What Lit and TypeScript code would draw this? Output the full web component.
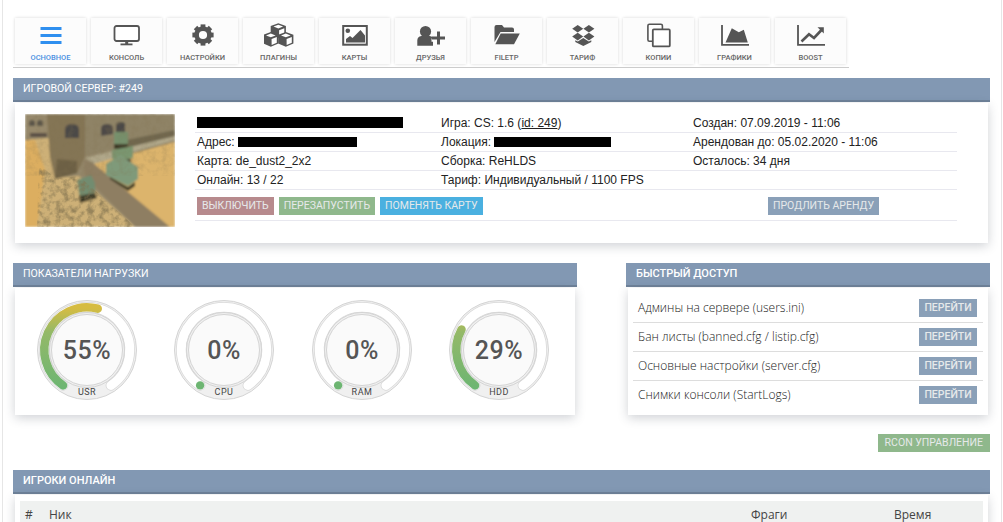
import { LitElement, html, css, svg } from 'lit';
import { customElement } from 'lit/decorators.js';

// little helper for the isometric boxes of the plugins icon
const cube = (x: number, y: number) => svg`
  <path d="M${x} ${y - 6.6}l7.6 2.8v8.6l-7.6 3.4-7.6-3.4v-8.6z" fill="#555"/>
  <path d="M${x} ${y - 5}l4.8 1.8-4.8 1.9-4.8-1.9z" fill="#fff"/>
  <path d="M${x + 6} ${y - 1.6}l-5.2 2v6l5.2-2.2z" fill="#fff"/>`;

const gearTeeth = [0, 45, 90, 135, 180, 225, 270, 315];

const ICONS: Record<string, unknown> = {
  menu: svg`<g fill="#2f8fef"><rect x="4.5" y="7" width="21" height="3"/><rect x="4.5" y="14" width="21" height="3"/><rect x="4.5" y="21" width="21" height="3"/></g>`,
  monitor: svg`<rect x="2.5" y="6" width="24.5" height="15" rx="2" fill="#fff" stroke="#555" stroke-width="1.8"/>
    <rect x="13.2" y="21" width="3" height="3" fill="#555"/><rect x="8.5" y="23.5" width="12" height="1.8" fill="#555"/>`,
  gear: svg`<circle cx="15" cy="15" r="6.4" fill="none" stroke="#555" stroke-width="4.6"/>
    ${gearTeeth.map((a) => svg`<rect x="12.6" y="4.4" width="4.8" height="4" fill="#555" transform="rotate(${a} 15 15)"/>`)}`,
  cubes: svg`${cube(14.3, 9.8)}${cube(6.8, 18.6)}${cube(21.8, 18.6)}`,
  image: svg`<rect x="3.2" y="6" width="23.6" height="18.7" fill="#fff" stroke="#555" stroke-width="2"/>
    <circle cx="7.8" cy="10.8" r="2.3" fill="#555"/><path d="M6 22.5v-3.5l4-3 2.5 2 8-8 4.5 5.5v7z" fill="#555"/>`,
  user: svg`<circle cx="9.5" cy="11.5" r="5.6" fill="#555"/><path d="M1.3 25.8v-5.3q0-4 4-4.5h8.4q3 .3 3.3 2.6h-1.5v3.2h1.5v4z" fill="#555"/>
    <path d="M21 11.5h3v5h5v3h-5v5h-3v-5h-5v-3h5z" fill="#555"/>`,
  folder: svg`<path d="M2.5 22V7q0-2 2-2h5.5l2 2.5h8q2 0 2 2v2.5H8.5z" fill="#555"/><path d="M8.7 13.5h19.1L22 24.3H3.3z" fill="#555"/>`,
  dropbox: svg`<g fill="#555"><path d="M9.7 5l5.5 3.8-5.5 3.8-5.5-3.8z"/><path d="M20.9 5l5.5 3.8-5.5 3.8-5.5-3.8z"/><path d="M9.7 12.8l5.5 3.8-5.5 3.8-5.5-3.8z"/><path d="M20.9 12.8l5.5 3.8-5.5 3.8-5.5-3.8z"/><path d="M15.3 18l5.5 3.6 2.5-1.3v1.6l-8 4-8-4v-1.6l2.5 1.3z"/></g>`,
  copy: svg`<rect x="3.9" y="4.2" width="14.5" height="17" rx="1.5" fill="#fff" stroke="#555" stroke-width="1.6"/>
    <rect x="8.8" y="9.4" width="17" height="17" rx="1" fill="#fff" stroke="#555" stroke-width="1.8"/>`,
  area: svg`<path d="M2 5v19.8h27" fill="none" stroke="#555" stroke-width="1.8"/><path d="M5.5 22.5L11.8 8.3l7 4 5-2.5 4 12.7z" fill="#555"/>`,
  line: svg`<path d="M2 5v19.8h27" fill="none" stroke="#555" stroke-width="1.8"/>
    <path d="M5.5 21.5l7.5-7.2 5 3.7 7.5-8" fill="none" stroke="#555" stroke-width="2.6"/><path d="M21.5 7.3h6.3v6.2z" fill="#555"/>`,
};

const NAV = [
  ['ОСНОВНОЕ', 'menu'],
  ['КОНСОЛЬ', 'monitor'],
  ['НАСТРОЙКИ', 'gear'],
  ['ПЛАГИНЫ', 'cubes'],
  ['КАРТЫ', 'image'],
  ['ДРУЗЬЯ', 'user'],
  ['FILETP', 'folder'],
  ['ТАРИФ', 'dropbox'],
  ['КОПИИ', 'copy'],
  ['ГРАФИКИ', 'area'],
  ['BOOST', 'line'],
];

const GAUGES = [
  { label: 'USR', value: 55 },
  { label: 'CPU', value: 0 },
  { label: 'RAM', value: 0 },
  { label: 'HDD', value: 29 },
];

const LINKS = [
  'Админы на сервере (users.ini)',
  'Бан листы (banned.cfg / listip.cfg)',
  'Основные настройки (server.cfg)',
  'Снимки консоли (StartLogs)',
];

// gauge arc runs clockwise from lower left, angles measured from straight down
const START = 34;
const SWEEP = 292;
const R = 42.7;

const pointAt = (deg: number) => {
  const a = (deg * Math.PI) / 180;
  return [50 - R * Math.sin(a), 50 + R * Math.cos(a)];
};

const arc = (from: number, to: number) => {
  const [x1, y1] = pointAt(from);
  const [x2, y2] = pointAt(to);
  const large = to - from > 180 ? 1 : 0;
  return `M${x1.toFixed(2)} ${y1.toFixed(2)}A${R} ${R} 0 ${large} 1 ${x2.toFixed(2)} ${y2.toFixed(2)}`;
};

@customElement('app-root')
export class AppRoot extends LitElement {
  static styles = css`
    :host {
      display: block;
      height: 522px;
      overflow: hidden;
      background: #fff;
      font-family: 'Liberation Sans', Arial, sans-serif;
      font-size: 12px;
      color: #222;
    }
    .page {
      margin: 0 1px 0 2px;
      height: 522px;
      box-sizing: border-box;
      border-left: 1px solid #e6e6e6;
      border-right: 1px solid #e6e6e6;
      padding: 18px 11px 0 10px;
      overflow: hidden;
    }
    .nav {
      display: inline-flex;
      gap: 5px;
      padding: 0 3px 3px 2px;
      border-bottom: 1px solid #ccc;
      margin-bottom: 10px;
      vertical-align: top;
    }
    .nav-item {
      width: 71px;
      height: 46px;
      background: #fcfcfc;
      box-shadow: 0 0 3px rgba(0, 0, 0, 0.16);
      display: flex;
      flex-direction: column;
      align-items: center;
      font-family: Roboto, sans-serif;
      font-size: 7.5px;
      font-weight: 500;
      color: #666;
    }
    .nav-item svg {
      width: 30px;
      height: 30px;
      margin-top: 2px;
      flex: none;
    }
    .nav-item span {
      margin-top: 3px;
      line-height: 10px;
    }
    .nav-item.active {
      color: #4a90e2;
    }
    .head {
      height: 22px;
      line-height: 22px;
      padding-left: 10px;
      background: #8298b3;
      border-bottom: 2px solid #6f8299;
      color: #fff;
      font-family: Roboto, sans-serif;
      font-size: 11px;
      font-weight: 500;
      text-transform: uppercase;
    }
    .head.thin {
      font-size: 10.6px;
      font-weight: 400;
    }
    .card {
      margin: 1px 2px 0;
      background: #fff;
      box-shadow: 0 3px 10px rgba(40, 50, 70, 0.22);
    }
    .server {
      height: 140px;
      box-sizing: border-box;
      padding: 11px 31px 0 10px;
      display: flex;
      gap: 20px;
      margin-bottom: 20px;
    }
    .shot {
      width: 150px;
      height: 113px;
      flex: none;
    }
    .info {
      flex: 1;
    }
    .row {
      display: grid;
      grid-template-columns: 244px 252px 1fr;
      height: 19px;
      box-sizing: border-box;
      line-height: 18px;
      padding-left: 2px;
      border-bottom: 1px solid #e8e8ef;
      color: #222;
    }
    .row a {
      color: #222;
    }
    .black {
      display: inline-block;
      height: 10px;
      background: #000;
      vertical-align: -1px;
    }
    .actions {
      height: 31px;
      align-items: start;
      padding-top: 7px;
    }
    .actions .left {
      grid-column: span 2;
      display: flex;
      gap: 5px;
    }
    .actions .extend {
      margin-left: 75px;
      justify-self: start;
    }
    .btn {
      display: inline-block;
      height: 18px;
      line-height: 18px;
      padding: 0 5px;
      color: #e6e9ea;
      font-family: Roboto, sans-serif;
      font-size: 10.5px;
      text-transform: uppercase;
      white-space: nowrap;
    }
    .red { background: #b78a8d; }
    .green { background: #8fb88c; }
    .blue { background: #4ab0e0; }
    .steel { background: #8aa0b8; }
    .columns {
      display: flex;
      justify-content: space-between;
      margin-bottom: 19px;
    }
    .load { width: 564px; }
    .quick { width: 364px; }
    .gauges {
      height: 127px;
      box-sizing: border-box;
      padding: 12px 0 0 22px;
      display: flex;
      gap: 37.3px;
    }
    .gauge {
      width: 100px;
      height: 100px;
      flex: none;
    }
    .gauge .value {
      font-family: Roboto, sans-serif;
      font-size: 25px;
      font-weight: 500;
      fill: #555;
      letter-spacing: 0.5px;
    }
    .gauge .name {
      font-family: Roboto, sans-serif;
      font-size: 9px;
      fill: #444;
      letter-spacing: 0.5px;
    }
    .links {
      height: 127px;
      box-sizing: border-box;
      padding: 6px 5px 0;
      font-family: 'Open Sans', sans-serif;
      font-weight: 300;
      color: #222;
    }
    .link {
      display: flex;
      justify-content: space-between;
      height: 29px;
      box-sizing: border-box;
      padding: 5px 6px 0 5px;
      line-height: 18px;
      border-bottom: 1px solid #ddd;
    }
    .link:last-child {
      border-bottom: none;
    }
    .link .btn {
      padding: 0;
      width: 58px;
      text-align: center;
      font-weight: 500;
    }
    .rcon {
      display: flex;
      justify-content: flex-end;
      margin-bottom: 18px;
    }
    .rcon .btn {
      padding: 0 7px;
    }
    .players {
      padding: 6px 5px 0;
      height: 60px;
    }
    .thead {
      background: #eff1f0;
      display: grid;
      grid-template-columns: 24px 702px 143px 1fr;
      padding: 6px 5px 0;
      height: 40px;
      box-sizing: border-box;
      font-family: 'Open Sans', sans-serif;
      color: #444;
      line-height: 15px;
    }
  `;

  renderShot() {
    return html`<svg class="shot" viewBox="0 0 150 113" preserveAspectRatio="none">
      <defs>
        <filter id="soft" x="0" y="0" width="100%" height="100%"><feGaussianBlur stdDeviation="0.8"/></filter>
        <filter id="grain" x="0" y="0" width="100%" height="100%">
          <feTurbulence type="fractalNoise" baseFrequency="0.16" numOctaves="3" seed="4"/>
          <feColorMatrix values="0 0 0 0 0.22  0 0 0 0 0.17  0 0 0 0 0.08  0 0 0 2.6 -1.05"/>
        </filter>
        <clipPath id="rubble"><path d="M14 50l16 14 24-2 56 51H12z"/></clipPath>
      </defs>
      <g filter="url(#soft)">
        <rect width="150" height="113" fill="#94876a"/>
        <path d="M0 26l24-2 6 40 24-2 56 51H0z" fill="#cdb077"/>
        <path d="M0 26h10l10 30-8 57H0z" fill="#dcae60"/>
        <path d="M0 0h25v22L0 26z" fill="#97896c"/>
        <path d="M22 0h38v43l-8 16-22 6-5-22z" fill="#847555"/>
        <path d="M32 45l20 2v12l-22 6z" fill="#6d6045"/>
        <path d="M60 0h90v20L60 42z" fill="#8f8366"/>
        <path d="M92 28l58-12v9l-56 21z" fill="#6f664d"/>
        <path d="M60 44l90-22v4L70 50z" fill="#b0a78a"/>
        <path d="M68 50l82-22v85h-8z" fill="#dcb46c"/>
        <path d="M59 46l9 3 77 64h-34L60 62z" fill="#8e7e62"/>
        <path d="M40 24v-8q0-6 7-6t7 6v8z" fill="#4c4846"/>
        <path d="M76 22v-7q0-5 6-5t6 5v5z" fill="#4e4947"/>
        <path d="M91 19v-7q0-4 5-4t4 4v6z" fill="#4c4846"/>
        <path d="M4 12v-3q0-3 3-3t3 3v3zM12 12v-3q0-3 3-3t3 3v3z" fill="#5a544a"/>
        <rect x="5" y="19" width="17" height="4" fill="#5a4d45"/>
        <path d="M89 18h14v14H89z" fill="#76906c"/><rect x="89" y="30" width="14" height="5" fill="#3d3a28"/>
        <path d="M87 36l21-4v12l-17 4-4-4z" fill="#7a9670"/><rect x="90" y="45" width="16" height="4" fill="#3b3a2a"/>
        <path d="M81 50l14-9 18 12v12l-10 7-22-11z" fill="#7f9a7a"/><path d="M85 63l18 10 7-5v4l-7 5-18-12z" fill="#3c3a27"/>
        <path d="M52 66l14-5 4 8v12l-15 4z" fill="#728c70"/><path d="M54 82l16-3 2 5-17 5z" fill="#3a3826"/>
      </g>
      <rect width="150" height="113" filter="url(#grain)" clip-path="url(#rubble)" opacity="0.7"/>
      <rect width="150" height="62" filter="url(#grain)" opacity="0.18"/>
    </svg>`;
  }

  renderGauge(g: { label: string; value: number }) {
    const end = START + (SWEEP * g.value) / 100;
    return html`<svg class="gauge" viewBox="0 0 100 100">
      <defs>
        <linearGradient id="heat-${g.label}" gradientUnits="userSpaceOnUse" x1="0" y1="88" x2="0" y2="8">
          <stop offset="0" stop-color="#6db572"/>
          <stop offset="0.7" stop-color="#94b968"/>
          <stop offset="1" stop-color="#d6bc42"/>
        </linearGradient>
      </defs>
      <circle cx="50" cy="50" r="49.5" fill="#f0f0f0" stroke="#d4d4d4"/>
      <path d=${arc(START, START + SWEEP)} fill="none" stroke="#d8d8d8" stroke-width="10.5" stroke-linecap="round"/>
      <path d=${arc(START, START + SWEEP)} fill="none" stroke="#fff" stroke-width="9" stroke-linecap="round"/>
      ${g.value > 0
        ? svg`<path d=${arc(START, end)} fill="none" stroke="url(#heat-${g.label})" stroke-width="8.5" stroke-linecap="round"/>`
        : svg`<circle cx=${pointAt(START)[0]} cy=${pointAt(START)[1]} r="4.2" fill="#6db572"/>`}
      <circle cx="50" cy="50" r="37.5" fill="#f0f0f0" stroke="#d4d4d4"/>
      <circle cx="50" cy="50" r="35.5" fill="#fafafa" stroke="#d4d4d4"/>
      <text class="value" x="50" y="59" text-anchor="middle">${g.value}%</text>
      <text class="name" x="50" y="94.5" text-anchor="middle">${g.label}</text>
    </svg>`;
  }

  render() {
    return html`<div class="page">
      <div class="nav">
        ${NAV.map(
          ([label, icon], i) => html`<div class="nav-item ${i === 0 ? 'active' : ''}">
            <svg viewBox="0 0 30 30">${ICONS[icon]}</svg>
            <span>${label}</span>
          </div>`
        )}
      </div>

      <div class="head thin">Игровой сервер: #249</div>
      <div class="card server">
        ${this.renderShot()}
        <div class="info">
          <div class="row">
            <div><span class="black" style="width:206px;height:11px"></span></div>
            <div>Игра: CS: 1.6 (<a href="#">id: 249</a>)</div>
            <div>Создан: 07.09.2019 - 11:06</div>
          </div>
          <div class="row">
            <div>Адрес: <span class="black" style="width:119px"></span></div>
            <div>Локация: <span class="black" style="width:117px"></span></div>
            <div>Арендован до: 05.02.2020 - 11:06</div>
          </div>
          <div class="row">
            <div>Карта: de_dust2_2x2</div>
            <div>Сборка: ReHLDS</div>
            <div>Осталось: 34 дня</div>
          </div>
          <div class="row">
            <div>Онлайн: 13 / 22</div>
            <div>Тариф: Индивидуальный / 1100 FPS</div>
            <div></div>
          </div>
          <div class="row actions">
            <div class="left">
              <span class="btn red">Выключить</span>
              <span class="btn green">Перезапустить</span>
              <span class="btn blue">Поменять карту</span>
            </div>
            <span class="btn steel extend">Продлить аренду</span>
          </div>
        </div>
      </div>

      <div class="columns">
        <div class="load">
          <div class="head thin">Показатели нагрузки</div>
          <div class="card gauges">${GAUGES.map((g) => this.renderGauge(g))}</div>
        </div>
        <div class="quick">
          <div class="head">Быстрый доступ</div>
          <div class="card links">
            ${LINKS.map(
              (l) => html`<div class="link"><span>${l}</span><span class="btn steel">Перейти</span></div>`
            )}
          </div>
        </div>
      </div>

      <div class="rcon"><span class="btn green">RCON управление</span></div>

      <div class="head">Игроки онлайн</div>
      <div class="card players">
        <div class="thead">
          <span>#</span><span>Ник</span><span>Фраги</span><span>Время</span>
        </div>
      </div>
    </div>`;
  }
}
